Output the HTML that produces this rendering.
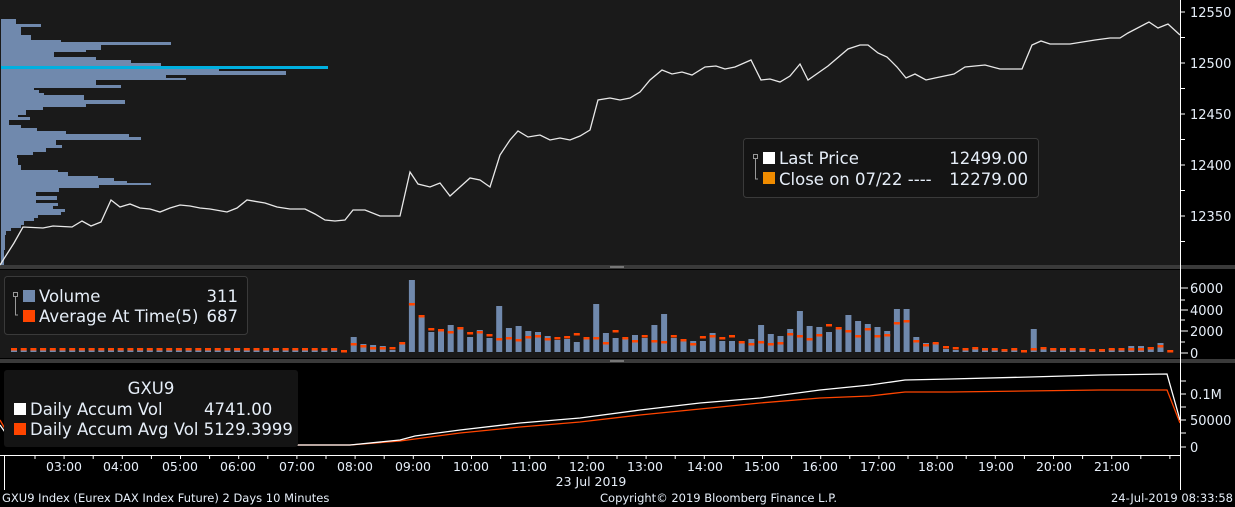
<!DOCTYPE html><html><head><meta charset="utf-8"><style>
body{margin:0;background:#000;width:1235px;height:507px;overflow:hidden;font-family:"Liberation Sans","DejaVu Sans",sans-serif}
svg{position:absolute;left:0;top:0}
text{font-family:"DejaVu Sans","Liberation Sans",sans-serif;fill:#e6eef8}
</style></head><body>
<svg id="s" width="1235" height="507" xmlns="http://www.w3.org/2000/svg">
<rect x="0" y="0" width="1180" height="265" fill="#1a1a1a"/>
<rect x="0" y="270" width="1180" height="88" fill="#1a1a1a"/>
<rect x="0" y="265" width="1235" height="4" fill="#3a3a3a"/>
<rect x="610" y="266" width="14" height="2" fill="#777"/>
<rect x="0" y="359" width="1235" height="4" fill="#3a3a3a"/>
<rect x="610" y="360" width="14" height="2" fill="#777"/>
<g id="hist" fill="#7089ad"></g>
<rect x="1" y="66" width="327" height="3" fill="#00b0e0"/>
<polyline fill="none" stroke="#e8e8e8" stroke-width="1.3" points="0,265 14,243 23,227 43,228 53,226 72,227 82,221 91,226 101,222 111,200 120,207 130,204 140,208 150,209 160,212 170,208 180,205 190,206 200,208 210,209 227,212 237,208 247,200 265,203 277,207 290,209 305,209 315,214 325,220 335,221 345,220 353,210 365,210 380,216 392,216 400,216 410,172 418,184 430,187 440,183 450,196 460,187 470,178 480,180 490,187 500,155 510,140 518,131 528,137 540,135 550,140 560,138 570,140 580,136 590,130 598,100 610,98 620,100 630,98 640,92 650,80 662,70 672,74 682,72 692,75 705,67 716,66 725,69 735,67 751,60 761,80 770,79 780,82 790,76 800,64 808,80 828,66 848,49 860,45 868,45 878,53 887,57 897,67 906,78 915,74 926,80 935,78 954,74 965,67 985,65 1000,69 1022,69 1032,45 1041,41 1050,44 1070,44 1095,40 1110,38 1120,38 1128,33 1149,22 1158,28 1168,24 1180,35"/>
<g id="vol"></g>
<polyline fill="none" stroke="#ff4500" stroke-width="1.3" points="0,420 14,445 350,445 400,441 460,433 520,427 580,422 640,415 700,409 760,403 820,398 870,396 905,392 950,392 1100,390 1167,390 1180,423"/>
<polyline fill="none" stroke="#ffffff" stroke-width="1.3" points="0,425 14,445 350,445 400,440 415,436 460,430 520,423 580,418 640,410 700,403 760,398 820,390 870,385 905,380 950,379 1030,377 1100,375 1167,374 1180,420"/>
<line x1="1180.5" y1="0" x2="1180.5" y2="490" stroke="#fff"/>
<line x1="0" y1="455.5" x2="1180" y2="455.5" stroke="#fff"/>
<line x1="4.5" y1="455" x2="4.5" y2="490" stroke="#fff"/>
<g id="ax"></g>
<g font-size="13">
<text x="1190" y="17">12550</text><text x="1190" y="68">12500</text><text x="1190" y="119">12450</text><text x="1190" y="170">12400</text><text x="1190" y="221">12350</text>
<text x="1190" y="293">6000</text><text x="1190" y="315">4000</text><text x="1190" y="336">2000</text><text x="1190" y="358">0</text>
<text x="1190" y="399">0.1M</text><text x="1190" y="425">50000</text><text x="1190" y="452">0</text>
</g>
<g font-size="12.5" text-anchor="middle">
<text x="64" y="471">03:00</text><text x="121" y="471">04:00</text><text x="180" y="471">05:00</text><text x="238" y="471">06:00</text><text x="297" y="471">07:00</text><text x="355" y="471">08:00</text><text x="413" y="471">09:00</text><text x="471" y="471">10:00</text><text x="529" y="471">11:00</text><text x="587" y="471">12:00</text><text x="645" y="471">13:00</text><text x="705" y="471">14:00</text><text x="762" y="471">15:00</text><text x="820" y="471">16:00</text><text x="878" y="471">17:00</text><text x="936" y="471">18:00</text><text x="996" y="471">19:00</text><text x="1054" y="471">20:00</text><text x="1112" y="471">21:00</text>
<text x="591" y="486">23 Jul 2019</text>
</g>
<g font-size="11.5">
<text x="2" y="502">GXU9 Index (Eurex DAX Index Future) 2 Days 10 Minutes</text>
<text x="600" y="502">Copyright© 2019 Bloomberg Finance L.P.</text>
<text x="1233" y="502" text-anchor="end">24-Jul-2019 08:33:58</text>
</g>
<rect x="743.5" y="138.5" width="295" height="59" rx="3" fill="#141414" stroke="#3a3a3a"/>
<rect x="753.5" y="154.5" width="4" height="4" fill="none" stroke="#999"/><path d="M755.5 159V179H758" stroke="#999" fill="none"/>
<rect x="763" y="152" width="12" height="12" fill="#fff"/><rect x="763" y="172" width="12" height="12" fill="#f08c00"/>
<g font-size="16.5"><text x="779" y="164">Last Price</text><text x="1028" y="164" text-anchor="end">12499.00</text>
<text x="779" y="185">Close on 07/22 ----</text><text x="1028" y="185" text-anchor="end">12279.00</text></g>
<rect x="4.5" y="276.5" width="243" height="58" rx="3" fill="#141414" stroke="#3a3a3a"/>
<rect x="13.5" y="292.5" width="4" height="4" fill="none" stroke="#999"/><path d="M15.5 297V315H18" stroke="#999" fill="none"/>
<rect x="23" y="290" width="12" height="12" fill="#7089ad"/><rect x="23" y="310" width="12" height="12" fill="#ff4500"/>
<g font-size="16.5"><text x="39" y="302">Volume</text><text x="238" y="302" text-anchor="end">311</text>
<text x="39" y="322">Average At Time(5)</text><text x="238" y="322" text-anchor="end">687</text></g>
<rect x="4" y="370" width="294" height="77" rx="3" fill="#141414"/>
<rect x="14" y="403" width="12" height="12" fill="#fff"/><rect x="14" y="423" width="12" height="12" fill="#ff4500"/>
<g font-size="16.5"><text x="151" y="394" text-anchor="middle">GXU9</text><text x="30" y="415">Daily Accum Vol</text><text x="204" y="415">4741.00</text>
<text x="30" y="435">Daily Accum Avg Vol 5129.3999</text></g>
</svg>
<script>
var NS="http://www.w3.org/2000/svg";
function r(g,x,y,w,h,c){var e=document.createElementNS(NS,"rect");e.setAttribute("x",x);e.setAttribute("y",y);e.setAttribute("width",w);e.setAttribute("height",h);if(c)e.setAttribute("fill",c);g.appendChild(e);}
var H=document.getElementById("hist");
var hd=[[19,24,15],[24,27,40],[27,35,20],[35,40,30],[40,42,60],[42,45,170],[45,50,100],[50,52,85],[52,57,53],[57,60,95],[60,63,130],[63,66,160],[69,71,218],[71,75,285],[75,78,165],[78,80,185],[80,85,95],[85,88,120],[88,90,33],[90,93,38],[93,95,43],[95,100,83],[100,104,124],[104,107,85],[107,110,42],[110,115,25],[115,117,17],[117,120,29],[120,125,8],[125,128,20],[128,131,36],[131,134,65],[134,137,128],[137,140,140],[140,145,55],[145,148,61],[148,152,45],[152,155,32],[155,158,16],[158,165,17],[165,170,20],[170,172,57],[172,176,67],[176,178,97],[178,181,113],[181,183,126],[183,185,150],[185,188,98],[188,192,58],[192,196,35],[196,200,56],[200,203,35],[203,206,57],[206,209,52],[209,212,64],[212,215,60],[215,218,37],[218,221,33],[221,225,23],[225,228,20],[228,231,10],[231,235,5],[235,250,4],[250,265,3]];
hd.forEach(function(a){r(H,1,a[0],a[2],a[1]-a[0]);});
var V=document.getElementById("vol");
var pre=[];for(var i=0;i<34;i++){pre.push([i%5==3?4:2,3]);}
var mid=[[0,1],[15,8],[8,6],[7,4],[6,4],[2,4],[8,9],[72,48],[35,36],[20,23],[23,22],[27,20],[25,24],[15,19],[22,20],[14,17],[46,13],[24,14],[26,12],[21,15],[20,16],[16,13],[12,14],[13,15],[10,18],[13,14],[48,14],[19,9],[14,21],[13,14],[17,11],[14,16],[27,11],[38,10],[14,16],[11,12],[11,8],[11,15],[19,16],[11,14],[11,16],[9,10],[13,8],[27,10],[18,8],[16,9],[23,18],[41,16],[26,13],[25,17],[20,27],[23,24],[37,21],[31,16],[28,23],[25,16],[21,17],[43,29],[43,31],[15,11],[9,7],[9,9]];
var post=[[3,5],[2,4],[4,3],[3,4],[2,3],[2,3],[2,2],[2,3],[1,1],[23,3],[5,4],[4,3],[3,3],[2,3],[2,3],[2,2],[2,2],[3,3],[4,3],[6,3],[6,3],[5,4],[9,6],[1,1]];
var x=11;pre.forEach(function(d){b(x,d);x+=9.7;});
x=341;mid.forEach(function(d){b(x,d);x+=9.7;});
x=943;post.forEach(function(d){b(x,d);x+=9.75;});
function b(x,d){if(d[0]>1)r(V,x,352-d[0],6,d[0],"#7089ad");r(V,x,352-d[1]-1,6,2.5,"#ff4500");}
var A=document.getElementById("ax");
function L(x1,y1,x2,y2){var e=document.createElementNS(NS,"line");e.setAttribute("x1",x1);e.setAttribute("y1",y1);e.setAttribute("x2",x2);e.setAttribute("y2",y2);e.setAttribute("stroke","#fff");A.appendChild(e);}
for(var y=12;y<265;y+=25.5)L(1180,y,1185,y);
[288,310,331,353].forEach(function(y){L(1180,y,1188,y);});
[300,320,342].forEach(function(y){L(1180,y,1185,y);});
[394,420,447,381,407,433].forEach(function(y){L(1180,y,1186,y);});
for(var t=35;t<1180;t+=29.1)L(t,455,t,459);
</script>
</body></html>
